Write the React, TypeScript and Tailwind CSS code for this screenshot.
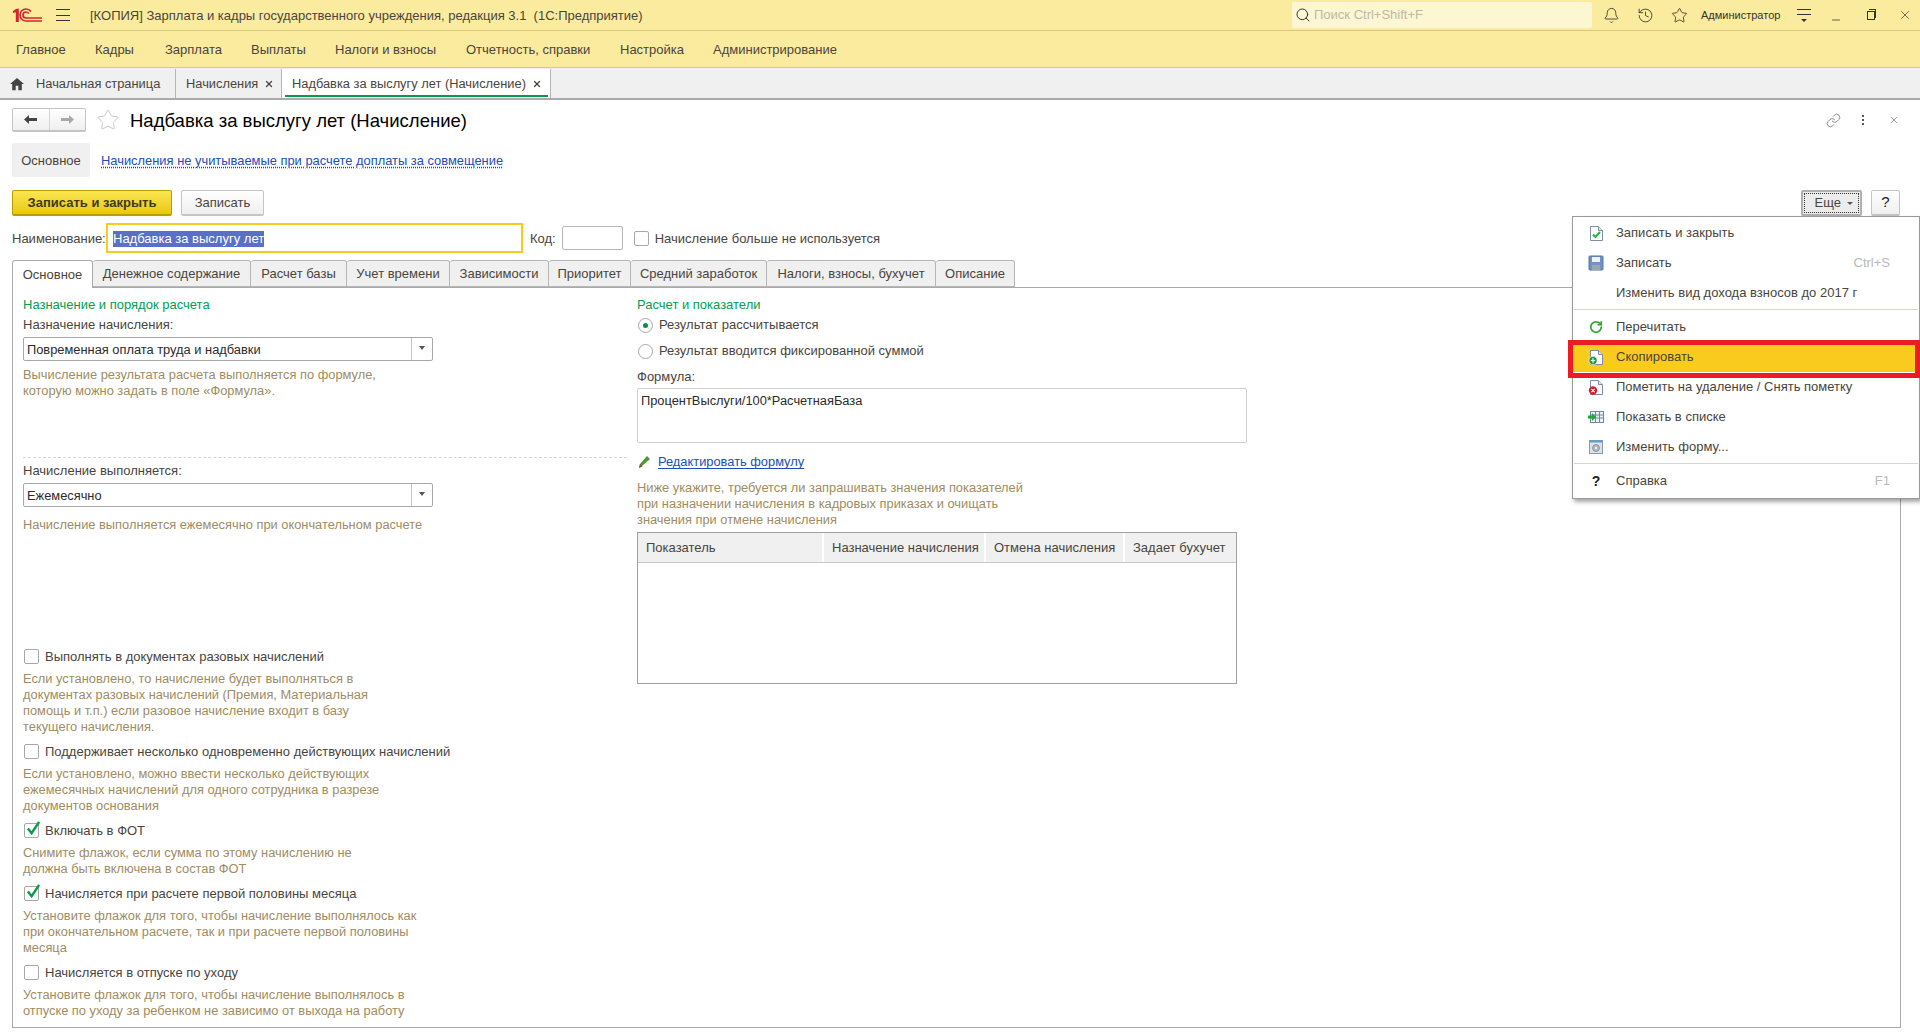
import { Bell, History, Star, Search, Link, RotateCw, X, Minus } from "lucide-react";
import type { ReactNode } from "react";

const topMenu = [
  { name: "Главное", w: "w-[79px]" },
  { name: "Кадры", w: "w-[70px]" },
  { name: "Зарплата", w: "w-[86px]" },
  { name: "Выплаты", w: "w-[84px]" },
  { name: "Налоги и взносы", w: "w-[131px]" },
  { name: "Отчетность, справки", w: "w-[154px]" },
  { name: "Настройка", w: "w-[93px]" },
  { name: "Администрирование", w: "w-[150px]" },
];

const formTabs = [
  { name: "Денежное содержание", w: "w-[158px]" },
  { name: "Расчет базы", w: "w-[96px]" },
  { name: "Учет времени", w: "w-[103px]" },
  { name: "Зависимости", w: "w-[99px]" },
  { name: "Приоритет", w: "w-[82px]" },
  { name: "Средний заработок", w: "w-[136px]" },
  { name: "Налоги, взносы, бухучет", w: "w-[169px]" },
  { name: "Описание", w: "w-[79px]" },
];

const options = [
  {
    label: "Выполнять в документах разовых начислений",
    checked: false,
    hint: [
      "Если установлено, то начисление будет выполняться в",
      "документах разовых начислений (Премия, Материальная",
      "помощь и т.п.) если разовое начисление входит в базу",
      "текущего начисления.",
    ],
  },
  {
    label: "Поддерживает несколько одновременно действующих начислений",
    checked: false,
    hint: [
      "Если установлено, можно ввести несколько действующих",
      "ежемесячных начислений для одного сотрудника в разрезе",
      "документов основания",
    ],
  },
  {
    label: "Включать в ФОТ",
    checked: true,
    hint: ["Снимите флажок, если сумма по этому начислению не", "должна быть включена в состав ФОТ"],
  },
  {
    label: "Начисляется при расчете первой половины месяца",
    checked: true,
    hint: [
      "Установите флажок для того, чтобы начисление выполнялось как",
      "при окончательном расчете, так и при расчете первой половины",
      "месяца",
    ],
  },
  {
    label: "Начисляется в отпуске по уходу",
    checked: false,
    hint: [
      "Установите флажок для того, чтобы начисление выполнялось в",
      "отпуске по уходу за ребенком не зависимо от выхода на работу",
    ],
  },
];

function Hint({ lines, className = "" }: { lines: string[]; className?: string }) {
  return (
    <div className={`text-[12.85px] text-[#a08c62] leading-4 whitespace-nowrap ${className}`}>
      {lines.map((l) => (
        <div key={l}>{l}</div>
      ))}
    </div>
  );
}

function Select({ value }: { value: string }) {
  return (
    <div className="flex h-6 w-[410px] rounded-[2px] border border-[#a8a8a8] bg-white">
      <div className="flex-1 pl-[3px] text-[12.85px] leading-[23px] text-[#2b2b2b]">{value}</div>
      <div className="flex w-[21px] items-center justify-center border-l border-[#c4c4c4]">
        <span className="mb-[3px] h-0 w-0 border-x-[3px] border-t-[4px] border-x-transparent border-t-[#555]" />
      </div>
    </div>
  );
}

function Checkbox({ checked = false }: { checked?: boolean }) {
  return (
    <span className="relative block h-[15px] w-[15px] shrink-0 rounded-[2px] border border-[#a8a8a8] bg-white">
      {checked && (
        <svg viewBox="0 0 16 16" className="absolute -top-[3px] left-[1px] h-[15px] w-[15px]">
          <path d="M2 8l4 5 8-12" fill="none" stroke="#0a9a4a" strokeWidth="2.6" />
        </svg>
      )}
    </span>
  );
}

function Radio({ checked = false }: { checked?: boolean }) {
  return (
    <span className="flex h-[15px] w-[15px] items-center justify-center rounded-full border border-[#a8a8a8] bg-white">
      {checked && <span className="h-[5px] w-[5px] rounded-full bg-[#0a8f4a]" />}
    </span>
  );
}

function Page({ children }: { children?: ReactNode }) {
  return (
    <svg viewBox="0 0 16 16" className="h-4 w-4">
      <path d="M2.500 1.500h8l4 4v10h-12z" fill="#fff" stroke="#7d8ea3" />
      <path d="M10.500 1.500v4h4" fill="#dfe6ee" stroke="#7d8ea3" />
      {children}
    </svg>
  );
}

const menuItems: { label?: string; icon?: ReactNode; key?: string; sep?: boolean; active?: boolean }[] = [
  {
    label: "Записать и закрыть",
    icon: (
      <Page>
        <path d="M5 9.500l2.500 2.500 4.500-5" fill="none" stroke="#2cb34a" strokeWidth="2.200" />
      </Page>
    ),
  },
  {
    label: "Записать",
    key: "Ctrl+S",
    icon: (
      <svg viewBox="0 0 16 16" className="h-4 w-4">
        <rect x="1" y="1" width="14" height="14" rx="1" fill="#6f93c4" stroke="#55749f" />
        <rect x="4" y="2" width="8" height="5" fill="#eef3f9" />
        <rect x="4" y="10" width="8" height="5" fill="#9aa5b2" />
      </svg>
    ),
  },
  { label: "Изменить вид дохода взносов до 2017 г" },
  { sep: true },
  { label: "Перечитать", icon: <RotateCw className="h-[14px] w-[14px] text-[#33a532]" strokeWidth={3} /> },
  {
    label: "Скопировать",
    active: true,
    icon: (
      <Page>
        <circle cx="5" cy="11.500" r="4.200" fill="#1e9c4a" stroke="#fff" strokeWidth=".7" />
        <path d="M5 9.300v4.400M2.800 11.500h4.400" stroke="#fff" strokeWidth="1.200" />
      </Page>
    ),
  },
  {
    label: "Пометить на удаление / Снять пометку",
    icon: (
      <Page>
        <circle cx="5" cy="11.500" r="4.200" fill="#d3232e" />
        <path d="M3.400 9.900l3.200 3.200M6.600 9.900l-3.200 3.200" stroke="#fff" strokeWidth="1.100" />
      </Page>
    ),
  },
  {
    label: "Показать в списке",
    icon: (
      <svg viewBox="0 0 16 16" className="h-4 w-4">
        <rect x="2.500" y="2.500" width="13" height="11" fill="#eef2f7" stroke="#6e87a6" />
        <path d="M7.500 3v10M11.500 3v10M3 6h12M3 9h12" stroke="#6e87a6" />
        <path d="M0 6.500h4V4l4 4-4 4V9.500H0z" fill="#22a833" />
      </svg>
    ),
  },
  {
    label: "Изменить форму...",
    icon: (
      <svg viewBox="0 0 16 16" className="h-4 w-4">
        <rect x="1.500" y="1.500" width="13" height="13" fill="#dfe3e8" stroke="#8b99aa" />
        <rect x="1.500" y="1.500" width="13" height="2" fill="#5d9bd8" />
        <circle cx="8" cy="9" r="3.400" fill="#b4b9c0" stroke="#8a9099" />
        <circle cx="8" cy="9" r="1.200" fill="#eceef0" />
      </svg>
    ),
  },
  { sep: true },
  { label: "Справка", key: "F1", icon: <span className="text-[14px] font-bold text-[#222]">?</span> },
];

export default function App() {
  return (
    <div className="relative h-[1036px] w-[1920px] overflow-hidden bg-white font-['Liberation_Sans',Arial,sans-serif] text-[13px] text-[#4a453c]">
      {/* шапка */}
      <header className="flex h-[31px] items-center border-b border-[#d6c97f] bg-[#fbeb9f]">
        <svg viewBox="0 0 29 14" className="ml-[13px] h-[14px] w-[29px] shrink-0">
          <path d="M0 3l3-2 2.800-.5V14H2.800V4.200L0 5z" fill="#d9232a" />
          <path d="M18 3.500C16.500 1.500 14.500 1 13 1a6 6 0 0 0 0 12h16" fill="none" stroke="#d9232a" strokeWidth="1.700" />
          <path d="M15.800 5.500C15 4.500 14 4 13 4a3 3 0 0 0 0 6h16" fill="none" stroke="#d9232a" strokeWidth="1.700" />
        </svg>
        <div className="ml-[14px] flex h-[12px] w-[14px] shrink-0 flex-col justify-between">
          <span className="h-px bg-[#333]" />
          <span className="h-px bg-[#333]" />
          <span className="h-px bg-[#333]" />
        </div>
        <div className="ml-[20px] w-[1202px] whitespace-nowrap pt-px">
          [КОПИЯ] Зарплата и кадры государственного учреждения, редакция 3.1&nbsp; (1С:Предприятие)
        </div>
        <div className="flex h-[26px] w-[300px] items-center rounded-[2px] bg-[#fdf6d3] pl-[3px] text-[#bdb9a4]">
          <Search className="h-[16px] w-[16px] text-[#333]" strokeWidth={1.5} />
          <span className="ml-[3px]">Поиск Ctrl+Shift+F</span>
        </div>
        <Bell className="ml-[11px] h-[17px] w-[17px] text-[#333]" strokeWidth={1.2} />
        <History className="ml-[17px] h-[17px] w-[17px] text-[#333]" strokeWidth={1.2} />
        <Star className="ml-[17px] h-[17px] w-[17px] text-[#333]" strokeWidth={1.2} />
        <span className="ml-[13px] w-[82px] whitespace-nowrap text-[11px] text-[#333]">Администратор</span>
        <div className="ml-[14px] flex w-[14px] flex-col items-center gap-[4px]">
          <span className="h-px w-[14px] bg-[#333]" />
          <span className="h-px w-[14px] bg-[#333]" />
          <span className="h-0 w-0 border-x-[3px] border-t-[3px] border-x-transparent border-t-[#333]" />
        </div>
        <Minus className="ml-[19px] mt-[10px] h-[12px] w-[12px] text-[#333]" strokeWidth={1.500} />
        <div className="relative ml-[25px] h-[9px] w-[8px] border border-[#333]">
          <span className="absolute -right-[2px] -top-[3px] h-[9px] w-[7px] border-r border-t border-[#333]" />
        </div>
        <X className="ml-[23px] h-[14px] w-[14px] text-[#333]" strokeWidth={1.200} />
      </header>

      <nav className="flex h-[37px] items-center border-b border-[#d6c97f] bg-[#fbeb9f] pl-[16px] pt-px">
        {topMenu.map((m) => (
          <span key={m.name} className={`${m.w} whitespace-nowrap`}>
            {m.name}
          </span>
        ))}
      </nav>

      {/* открытые окна */}
      <div className="flex h-[32px] border-b-2 border-[#aaaaaa] bg-[#f0f0f0] pt-px text-[12.85px]">
        <div className="flex w-[176px] items-center border-r border-[#b5b5b5] pl-[10px]">
          <svg viewBox="0 0 16 16" className="h-[14px] w-[14px]">
            <path d="M8 1L0 8h2.500v7h4v-5h3v5h4V8H16z" fill="#444" />
          </svg>
          <span className="ml-[12px]">Начальная страница</span>
        </div>
        <div className="flex w-[106px] items-center border-r border-[#b5b5b5] pl-[10px]">
          <span>Начисления</span>
          <X className="ml-[6px] h-[10px] w-[10px] text-[#444]" strokeWidth={3} />
        </div>
        <div className="relative flex w-[269px] items-center border-r border-[#b5b5b5] bg-white pl-[10px]">
          <span className="whitespace-nowrap">Надбавка за выслугу лет (Начисление)</span>
          <X className="ml-[6px] h-[10px] w-[10px] text-[#444]" strokeWidth={3} />
          <span className="absolute bottom-[1px] left-[3px] right-[2px] h-[2px] bg-[#0a9a4a]" />
        </div>
      </div>

      {/* форма */}
      <main className="px-[12px]">
        <div className="mt-[8px] flex h-[24px] items-center pr-[9px]">
          <div className="flex h-[24px] w-[74px] rounded-[2px] border border-b-2 border-[#c4c4c4] bg-gradient-to-b from-white to-[#efefef]">
            <div className="flex flex-1 items-center justify-center border-r border-[#d5d5d5]">
              <svg viewBox="0 0 13 9" className="h-[9px] w-[13px]">
                <path d="M0 4.500L5 0v3h8v3H5v3z" fill="#444" />
              </svg>
            </div>
            <div className="flex flex-1 items-center justify-center">
              <svg viewBox="0 0 13 9" className="h-[9px] w-[13px]">
                <path d="M13 4.500L8 0v3H0v3h8v3z" fill="#a8a8a8" />
              </svg>
            </div>
          </div>
          <Star className="ml-[10px] h-[24px] w-[24px] text-[#c9c9c9]" strokeWidth={1} />
          <h1 className="ml-[10px] pt-px text-[18.500px] text-black">Надбавка за выслугу лет (Начисление)</h1>
          <Link className="ml-auto h-[15px] w-[15px] text-[#666]" strokeWidth={1.200} />
          <div className="ml-[21px] flex flex-col gap-[2px]">
            <span className="h-[2px] w-[2px] bg-[#555]" />
            <span className="h-[2px] w-[2px] bg-[#555]" />
            <span className="h-[2px] w-[2px] bg-[#555]" />
          </div>
          <X className="ml-[25px] h-[10px] w-[10px] text-[#555]" strokeWidth={1.500} />
        </div>

        <div className="mt-[11px] flex items-center">
          <div className="flex h-[34px] w-[78px] items-center justify-center rounded-[2px] bg-[#f0f0f0] pt-px">Основное</div>
          <a className="ml-[11px] pt-px text-[12.900px] text-[#1a4fb8] underline decoration-dotted underline-offset-2">
            Начисления не учитываемые при расчете доплаты за совмещение
          </a>
        </div>

        <div className="mt-[13px] flex h-[26px] items-stretch">
          <button className="w-[160px] rounded-[2px] border border-b-2 border-[#b89f00] bg-gradient-to-b from-[#fbe64f] to-[#e9c800] pt-px font-bold text-[#3d3a20]">
            Записать и закрыть
          </button>
          <button className="ml-[9px] w-[83px] rounded-[2px] border border-b-2 border-[#c4c4c4] bg-gradient-to-b from-white to-[#efefef] pt-px">
            Записать
          </button>
          <button className="ml-auto mr-[9px] w-[61px] rounded-[2px] border-2 border-[#b0b0b0] bg-[#ececec] p-px">
            <span className="flex h-full items-center justify-end gap-[6px] border border-dotted border-[#333] pr-[5px]">
              Еще
              <span className="h-0 w-0 border-x-[3px] border-t-[3px] border-x-transparent border-t-[#555]" />
            </span>
          </button>
          <button className="mr-[8px] w-[29px] rounded-[2px] border border-b-2 border-[#c4c4c4] bg-gradient-to-b from-white to-[#efefef] text-[15px] text-[#222]">
            ?
          </button>
        </div>

        <div className="mt-[7px] flex h-[30px] items-center">
          <span className="w-[94px] whitespace-nowrap pt-px">Наименование:</span>
          <div className="flex h-[30px] w-[417px] items-center border-2 border-[#f9c91e] pl-[5px] pt-px">
            <span className="bg-[#5a70c6] leading-[16px] text-white">Надбавка за выслугу лет</span>
          </div>
          <span className="ml-[7px] pt-px">Код:</span>
          <div className="ml-[6px] h-[24px] w-[61px] rounded-[2px] border border-[#b5b5b5]" />
          <span className="ml-[11px]">
            <Checkbox />
          </span>
          <span className="ml-[6px] whitespace-nowrap pt-px">Начисление больше не используется</span>
        </div>

        <div className="mt-[7px] flex h-[28px]">
          <div className="relative z-10 flex h-[28px] w-[81px] items-center justify-center rounded-t-[3px] border border-b-0 border-[#aaaaaa] bg-white">
            Основное
          </div>
          {formTabs.map((t) => (
            <div
              key={t.name}
              className={`${t.w} flex h-[27px] items-center justify-center whitespace-nowrap rounded-t-[3px] border-y border-r border-[#b5b5b5] bg-[#f0f0f0]`}
            >
              {t.name}
            </div>
          ))}
        </div>

        <div className="-mt-px mr-[7px] flex h-[741px] border border-[#aaaaaa] pl-[10px]">
          <section className="w-[614px] shrink-0 pt-[9px]">
            <div className="leading-4 text-[#00a04f]">Назначение и порядок расчета</div>
            <div className="mt-[4px] leading-4">Назначение начисления:</div>
            <div className="mt-[4px]">
              <Select value="Повременная оплата труда и надбавки" />
            </div>
            <Hint
              className="mt-[6px]"
              lines={["Вычисление результата расчета выполняется по формуле,", "которую можно задать в поле «Формула»."]}
            />
            <div className="mt-[58px] w-[604px] border-t border-dashed border-[#d5d5d5]" />
            <div className="mt-[5px] leading-4">Начисление выполняется:</div>
            <div className="mt-[4px]">
              <Select value="Ежемесячно" />
            </div>
            <Hint className="mt-[10px]" lines={["Начисление выполняется ежемесячно при окончательном расчете"]} />
            <div className="mt-[115px] flex flex-col gap-[8px]">
              {options.map((o) => (
                <div key={o.label}>
                  <div className="flex h-4 items-center pl-[1px]">
                    <Checkbox checked={o.checked} />
                    <span className="ml-[6px] whitespace-nowrap pt-[2px]">{o.label}</span>
                  </div>
                  <Hint className="mt-[7px]" lines={o.hint} />
                </div>
              ))}
            </div>
          </section>

          <section className="pt-[9px]">
            <div className="leading-4 text-[#00a04f]">Расчет и показатели</div>
            <div className="mt-[4px] flex h-4 items-center pl-[1px]">
              <Radio checked />
              <span className="ml-[6px]">Результат рассчитывается</span>
            </div>
            <div className="mt-[10px] flex h-4 items-center pl-[1px]">
              <Radio />
              <span className="ml-[6px]">Результат вводится фиксированной суммой</span>
            </div>
            <div className="mt-[10px] leading-4">Формула:</div>
            <div className="mt-[3px] h-[55px] w-[610px] rounded-[2px] border border-[#cfcfcf] pl-[3px] pt-[4px] text-[12.850px] leading-4 text-[#2b2b2b]">
              ПроцентВыслуги/100*РасчетнаяБаза
            </div>
            <div className="mt-[11px] flex h-4 items-center">
              <svg viewBox="0 0 14 14" className="ml-[1px] h-[14px] w-[14px]">
                <path d="M1 13l1-4 7-8 3 3-8 7z" fill="#4d9a34" />
                <path d="M1 13l1-4 2.500 2.500z" fill="#7a5a36" />
              </svg>
              <a className="ml-[6px] text-[12.850px] text-[#1a4fb8] underline underline-offset-2">Редактировать формулу</a>
            </div>
            <Hint
              className="mt-[10px]"
              lines={[
                "Ниже укажите, требуется ли запрашивать значения показателей",
                "при назначении начисления в кадровых приказах и очищать",
                "значения при отмене начисления",
              ]}
            />
            <div className="mt-[4px] h-[152px] w-[600px] border border-[#a0a0a0]">
              <div className="flex h-[30px] border-b border-[#c8c8c8]">
                <div className="flex w-[186px] items-center border-r-2 border-white bg-[#f0f0f0] pl-[8px]">Показатель</div>
                <div className="flex w-[162px] items-center border-r-2 border-white bg-[#f0f0f0] pl-[8px]">Назначение начисления</div>
                <div className="flex w-[139px] items-center border-r-2 border-white bg-[#f0f0f0] pl-[8px]">Отмена начисления</div>
                <div className="flex flex-1 items-center bg-[#f0f0f0] pl-[8px]">Задает бухучет</div>
              </div>
            </div>
          </section>
        </div>
      </main>

      {/* меню "Еще" */}
      <div className="absolute left-[1572px] top-[216px] z-20 w-[348px] border border-[#9a9a9a] bg-white pb-[2px] pt-px shadow-[2px_3px_4px_rgba(0,0,0,0.35)]">
        {menuItems.map((item, i) =>
          item.sep ? (
            <div key={i} className="mx-[1px] mb-[2px] mt-[1px] h-px bg-[#d8d6c8]" />
          ) : (
            <div
              key={item.label}
              className={`flex h-[30px] items-center ${item.active ? "bg-[#f9cb1c]" : ""}`}
            >
              <span className="flex w-[43px] shrink-0 items-center justify-center pl-[3px]">{item.icon}</span>
              <span className="whitespace-nowrap">{item.label}</span>
              {item.key && <span className="ml-auto mr-[29px] text-[#b9b9b9]">{item.key}</span>}
            </div>
          )
        )}
      </div>
      <div className="pointer-events-none absolute left-[1568px] top-[340px] z-30 h-[38px] w-[352px] border-[5px] border-[#ed1c24]" />
    </div>
  );
}
